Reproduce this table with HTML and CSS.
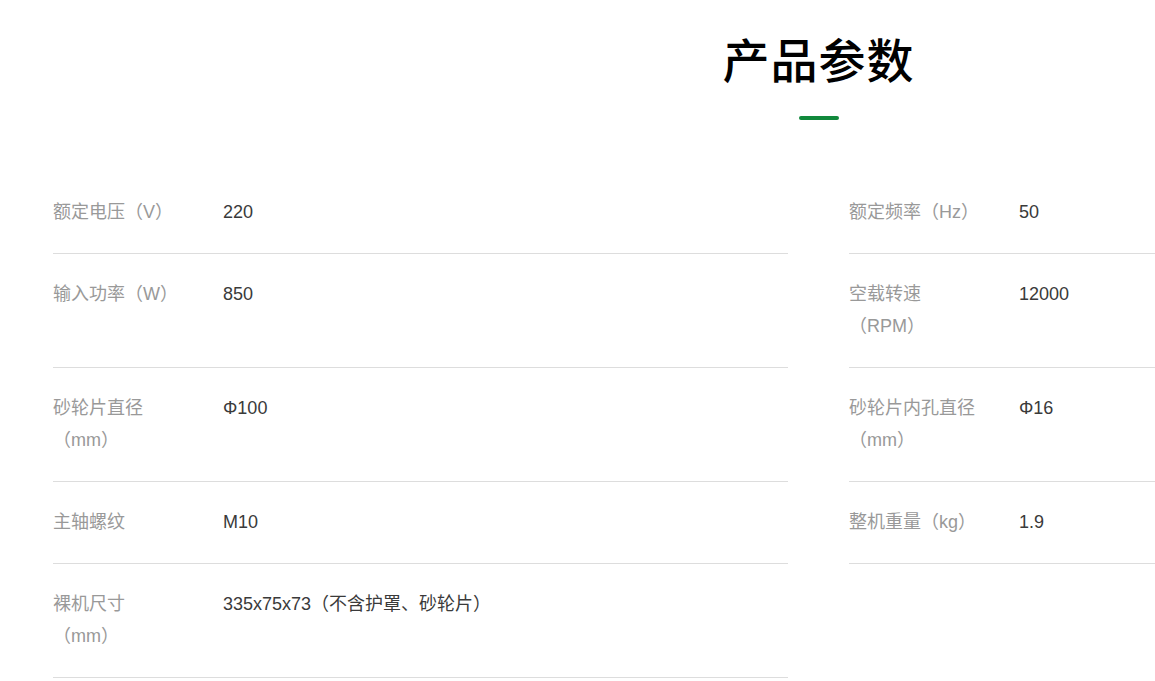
FILE: index.html
```html
<!DOCTYPE html>
<html lang="zh-CN">
<head>
<meta charset="utf-8">
<title>产品参数</title>
<link rel="stylesheet" href="styles.css">
</head>
<body>
<section class="params">
  <h2 class="params-title">产品参数</h2>
  <div class="params-bar"></div>
  <div class="params-grid">
    <div class="param"><div class="param-label">额定电压（V）</div><div class="param-value">220</div></div>
    <div class="param"><div class="param-label">额定频率（Hz）</div><div class="param-value">50</div></div>
    <div class="param"><div class="param-label">输入功率（W）</div><div class="param-value">850</div></div>
    <div class="param"><div class="param-label">空载转速（RPM）</div><div class="param-value">12000</div></div>
    <div class="param"><div class="param-label">砂轮片直径（mm）</div><div class="param-value">Φ100</div></div>
    <div class="param"><div class="param-label">砂轮片内孔直径（mm）</div><div class="param-value">Φ16</div></div>
    <div class="param"><div class="param-label">主轴螺纹</div><div class="param-value">M10</div></div>
    <div class="param"><div class="param-label">整机重量（kg）</div><div class="param-value">1.9</div></div>
    <div class="param"><div class="param-label">裸机尺寸（mm）</div><div class="param-value">335x75x73（不含护罩、砂轮片）</div></div>
  </div>
</section>
</body>
</html>
```
FILE: styles.css
```css
html, body {
  margin: 0;
  padding: 0;
  background: #fff;
  overflow: hidden;
}
body {
  font-family: "Liberation Sans", "Noto Sans CJK SC", sans-serif;
  color: #333;
}
.params {
  width: 1531px;
  margin-left: 53px;
  padding-top: 34px;
  display: flex;
  flex-direction: column;
  align-items: center;
}
.params-title {
  margin: 0;
  font-family: "Noto Sans CJK SC", sans-serif;
  font-size: 47px;
  line-height: 48px;
  font-weight: 500;
  color: #000;
  letter-spacing: 1px;
}
.params-bar {
  width: 40px;
  height: 4px;
  border-radius: 2px;
  background: #11893c;
  margin-top: 34px;
}
.params-grid {
  align-self: stretch;
  margin-top: 52px;
  display: grid;
  grid-template-columns: 1fr 1fr;
  column-gap: 61px;
}
.param {
  display: flex;
  padding: 24px 0 25px;
  border-bottom: 1px solid #ddd;
  font-size: 18px;
  line-height: 32px;
}
.param-label {
  width: 126px;
  flex: none;
  margin-right: 44px;
  color: #999;
}
.param-value {
  color: #3a3a3a;
}
```
